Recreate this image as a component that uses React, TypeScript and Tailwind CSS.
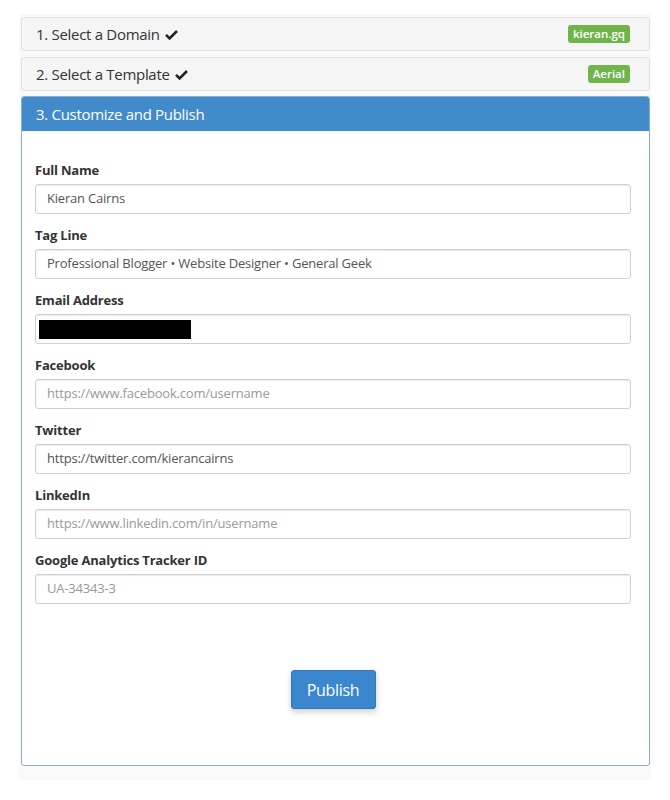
const fields = [
  { label: 'Full Name', value: 'Kieran Cairns' },
  { label: 'Tag Line', value: 'Professional Blogger • Website Designer • General Geek' },
  { label: 'Email Address', value: '', redacted: true },
  { label: 'Facebook', placeholder: 'https://www.facebook.com/username' },
  { label: 'Twitter', value: 'https://twitter.com/kierancairns' },
  { label: 'LinkedIn', placeholder: 'https://www.linkedin.com/in/username' },
  { label: 'Google Analytics Tracker ID', placeholder: 'UA-34343-3' },
];

function StepHeader({ title, badge }: { title: string; badge: string }) {
  return (
    <div className="h-[34px] flex items-center justify-between pl-[14px] pr-[19px] bg-[#f5f5f5] border border-[#e2e2e2] rounded-[3px]">
      <span className="text-[15px] text-[#333] tracking-[-0.3px] flex items-center gap-[5px]">
        {title}
        {/* check mark */}
        <svg width="13" height="11" viewBox="0 0 13 11" className="mt-[1px]">
          <path d="M1 5.8 L4.6 9.4 L12 2" fill="none" stroke="#222" strokeWidth="2.6" />
        </svg>
      </span>
      <span className="bg-[#71b44c] text-white text-[11.5px] font-semibold leading-none px-[5px] py-[3px] rounded-[3px]">
        {badge}
      </span>
    </div>
  );
}

export default function App() {
  return (
    <div className="min-h-[800px] bg-white pt-[14px] px-[19px] font-['Open_Sans',sans-serif]">
      <div className="bg-[#f9f9f9] pt-[3px] pl-[2px] pr-[1px] pb-[14px] flex flex-col">
        <StepHeader title="1. Select a Domain" badge="kieran.gq" />
        <div className="h-[6px]" />
        <StepHeader title="2. Select a Template" badge="Aerial" />
        <div className="h-[5px]" />
        <div className="border border-[#86b0d0] rounded-[3px] bg-white overflow-hidden">
          <div className="h-[34px] bg-[#428bca] flex items-center pl-[14px] text-white text-[15px] tracking-[-0.3px]">
            3. Customize and Publish
          </div>
          <div className="pl-[13px] pr-[18px] pt-[30px] pb-[56px] flex flex-col">
            {fields.map((f) => (
              <div key={f.label} className="mb-[12px]">
                <div className="text-[13px] font-bold text-[#333] tracking-[-0.2px] leading-[18px] mb-[5px]">
                  {f.label}
                </div>
                <div className="h-[30px] border border-[#d0d0d0] rounded-[3px] flex items-center px-[11px] shadow-[inset_0_1px_1px_rgba(0,0,0,0.08)]">
                  {f.redacted ? (
                    <div className="w-[152px] h-[19px] bg-black -ml-[8px]" />
                  ) : f.value ? (
                    <span className="text-[13px] text-[#555] tracking-[-0.2px]">{f.value}</span>
                  ) : (
                    <span className="text-[13px] text-[#999] tracking-[-0.2px]">{f.placeholder}</span>
                  )}
                </div>
              </div>
            ))}
            <div className="flex justify-center mt-[54px]">
              <button className="w-[85px] h-[39px] bg-[#3a87d0] border border-[#2f76bb] rounded-[3px] text-white text-[16px] tracking-[-0.3px] shadow-[0_3px_6px_rgba(0,0,0,0.2)]">
                Publish
              </button>
            </div>
          </div>
        </div>
      </div>
    </div>
  );
}
